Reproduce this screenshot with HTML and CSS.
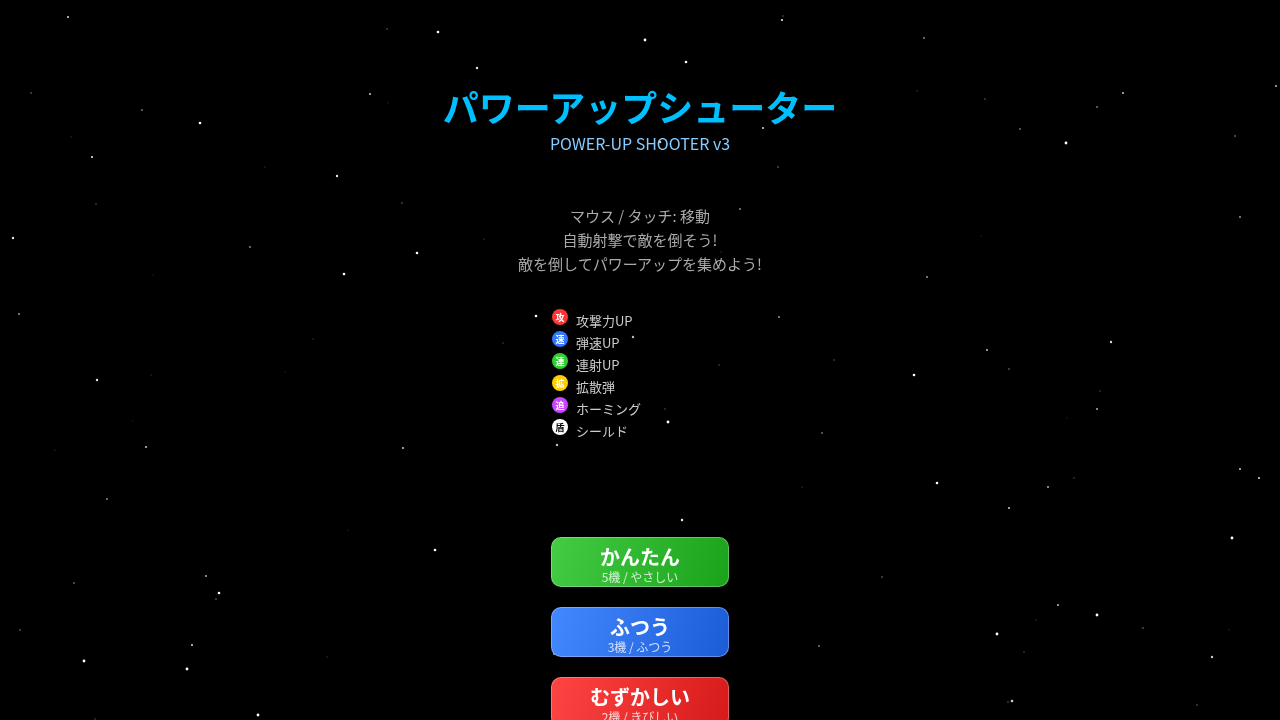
FILE: index.html
```html
<!DOCTYPE html>
<html lang="ja">
<head>
    <meta charset="UTF-8">
    <meta name="viewport" content="width=device-width, initial-scale=1.0">
    <title>パワーアップシューター</title>
    <link rel="stylesheet" href="styles.css">
</head>
<body>
    <canvas id="stars" class="stars"></canvas>

    <main class="title-screen">
        <h1>パワーアップシューター</h1>
        <p class="subtitle">POWER-UP SHOOTER v3</p>

        <p class="instructions">
            マウス / タッチ: 移動<br>
            自動射撃で敵を倒そう!<br>
            敵を倒してパワーアップを集めよう!
        </p>

        <ul class="powerups">
            <li><span class="icon attack">攻</span><span class="label">攻撃力UP</span></li>
            <li><span class="icon speed">速</span><span class="label">弾速UP</span></li>
            <li><span class="icon rapid">連</span><span class="label">連射UP</span></li>
            <li><span class="icon spread">拡</span><span class="label">拡散弾</span></li>
            <li><span class="icon homing">追</span><span class="label">ホーミング</span></li>
            <li><span class="icon shield">盾</span><span class="label">シールド</span></li>
        </ul>

        <div class="difficulty">
            <button class="btn easy" type="button">かんたん<small>5機 / やさしい</small></button>
            <button class="btn normal" type="button">ふつう<small>3機 / ふつう</small></button>
            <button class="btn hard" type="button">むずかしい<small>2機 / きびしい</small></button>
        </div>
    </main>

    <script src="stars.js"></script>
</body>
</html>
```
FILE: styles.css
```css
* {
    box-sizing: border-box;
}
body {
    margin: 0;
    height: 100vh;
    overflow: hidden;
    background: #000;
    color: #fff;
    font-family: "Noto Sans CJK JP", sans-serif;
}
.stars {
    position: fixed;
    top: 0;
    left: 0;
    z-index: -1;
}
.title-screen {
    display: flex;
    flex-direction: column;
    align-items: center;
    padding-top: 79px;
}
h1 {
    margin: 0;
    font-size: 36px;
    line-height: 54px;
    color: #00bfff;
}
.subtitle {
    margin: 0;
    font-size: 16px;
    line-height: 20px;
    color: #88ccff;
}
.instructions {
    margin: 51px 0 0;
    font-size: 15px;
    line-height: 24px;
    text-align: center;
    color: #aaa;
}
.powerups {
    width: 176px;
    margin: 31px 0 0;
    padding: 0;
    list-style: none;
}
.powerups li {
    display: flex;
    align-items: flex-start;
    gap: 8px;
    height: 22px;
}
.icon {
    width: 16px;
    height: 16px;
    margin-top: 2px;
    border-radius: 50%;
    font-size: 9px;
    font-weight: bold;
    line-height: 18px;
    text-align: center;
}
.label {
    padding-top: 3px;
    font-size: 13px;
    line-height: 22px;
    color: #ccc;
}
.attack {
    background: #ff3333;
}
.speed {
    background: #3377ff;
}
.rapid {
    background: #33cc33;
}
.spread {
    background: #ffcc00;
}
.homing {
    background: #cc44ff;
}
.shield {
    background: #fff;
    color: #000;
}
.difficulty {
    display: flex;
    flex-direction: column;
    gap: 20px;
    margin-top: 98px;
}
.btn {
    width: 178px;
    height: 50px;
    padding: 6px 0 0;
    border: 1px solid rgba(255, 255, 255, 0.3);
    border-radius: 10px;
    background-origin: border-box;
    color: #fff;
    font-family: inherit;
    font-size: 20px;
    font-weight: bold;
    line-height: 24px;
    cursor: pointer;
}
.btn small {
    display: block;
    font-size: 12px;
    font-weight: normal;
    line-height: 16px;
    color: rgba(255, 255, 255, 0.8);
}
.easy {
    background-image: linear-gradient(106deg, #44cc44, #1aa31a);
}
.normal {
    background-image: linear-gradient(106deg, #4488ff, #1a5cd6);
}
.hard {
    background-image: linear-gradient(106deg, #ff4444, #d61a1a);
}
```
FILE: stars.js
```js
const canvas = document.getElementById('stars');
const ctx = canvas.getContext('2d');

// x, y, radius, brightness
const stars = [
    [68, 17, 1.1, 0.8], [387, 29, 0.8, 0.4], [438, 32, 1.3, 1], [477, 68, 1.2, 0.9],
    [31, 93, 0.8, 0.5], [142, 110, 0.9, 0.5], [370, 94, 1, 0.8], [200, 123, 1.3, 1],
    [92, 157, 1.1, 0.9], [96, 204, 0.8, 0.35], [337, 176, 1.2, 0.9], [402, 203, 0.8, 0.4],
    [13, 238, 1.2, 0.9], [71, 137, 0.7, 0.2], [265, 167, 0.7, 0.2], [388, 103, 0.7, 0.15],
    [250, 247, 0.9, 0.6], [417, 253, 1.3, 1], [344, 274, 1.3, 1], [19, 314, 1, 0.6],
    [97, 380, 1.2, 0.9], [313, 339, 0.8, 0.2], [151, 375, 0.7, 0.2], [146, 447, 1.1, 0.75],
    [403, 448, 1.1, 0.75], [55, 450, 0.8, 0.15], [153, 275, 0.7, 0.12], [285, 372, 0.7, 0.12],
    [133, 421, 0.7, 0.12], [107, 499, 0.9, 0.6], [206, 576, 1, 0.7], [219, 593, 1.3, 1],
    [216, 599, 0.8, 0.5], [74, 583, 0.9, 0.4], [20, 630, 0.9, 0.35], [192, 645, 1.1, 0.8],
    [84, 661, 1.4, 1], [187, 669, 1.4, 1], [258, 715, 1.4, 1], [327, 657, 0.8, 0.2],
    [435, 550, 1.3, 1], [95, 719, 0.8, 0.3], [348, 530, 0.8, 0.12], [645, 40, 1.4, 1],
    [686, 62, 1.3, 1], [782, 20, 1.1, 0.9], [783, 16, 0.7, 0.4], [763, 128, 1.1, 0.8],
    [778, 167, 0.8, 0.5], [740, 209, 0.9, 0.6], [660, 142, 1.3, 0.8], [484, 239, 0.8, 0.2],
    [721, 252, 0.7, 0.2], [536, 316, 1.3, 1], [633, 337, 1.2, 0.75], [668, 422, 1.4, 1],
    [557, 445, 1.2, 0.75], [779, 317, 1, 0.6], [834, 360, 0.8, 0.35], [719, 365, 0.8, 0.3],
    [503, 343, 0.8, 0.25], [665, 409, 0.8, 0.3], [822, 433, 0.9, 0.45], [802, 487, 0.7, 0.25],
    [682, 520, 1.2, 0.95], [554, 654, 1, 0.6], [819, 646, 0.9, 0.5], [924, 38, 1, 0.5],
    [917, 91, 0.8, 0.2], [985, 99, 0.9, 0.25], [1020, 129, 0.9, 0.45], [1066, 143, 1.4, 1],
    [1097, 107, 0.9, 0.5], [1123, 93, 1.1, 0.7], [1276, 86, 1.1, 0.7], [1235, 136, 0.9, 0.4],
    [1240, 217, 1, 0.6], [981, 236, 0.7, 0.12], [927, 277, 1, 0.6], [987, 350, 1.1, 0.7],
    [914, 375, 1.3, 1], [1009, 369, 0.8, 0.5], [1111, 342, 1.2, 0.85], [1100, 391, 0.8, 0.3],
    [1097, 409, 1, 0.7], [1067, 418, 0.7, 0.12], [1240, 469, 1.1, 0.75], [1259, 478, 1.1, 0.8],
    [1074, 478, 0.8, 0.3], [937, 483, 1.3, 1], [1048, 487, 1, 0.7], [1009, 508, 1.1, 0.75],
    [1232, 538, 1.4, 1], [882, 577, 0.8, 0.5], [1058, 605, 1.1, 0.7], [1097, 615, 1.4, 1],
    [997, 634, 1.4, 1], [1036, 620, 0.8, 0.2], [1143, 628, 0.9, 0.35], [1229, 630, 0.7, 0.2],
    [1024, 652, 0.8, 0.3], [1212, 657, 1.2, 0.8], [1012, 701, 1.3, 0.8], [1008, 702, 0.8, 0.4],
    [1197, 705, 0.8, 0.4]
];

function drawStars() {
    canvas.width = window.innerWidth;
    canvas.height = window.innerHeight;
    ctx.fillStyle = '#fff';
    for (const [x, y, radius, brightness] of stars) {
        ctx.globalAlpha = brightness;
        ctx.beginPath();
        ctx.arc(x, y, radius, 0, Math.PI * 2);
        ctx.fill();
    }
}

window.addEventListener('resize', drawStars);
drawStars();
```
